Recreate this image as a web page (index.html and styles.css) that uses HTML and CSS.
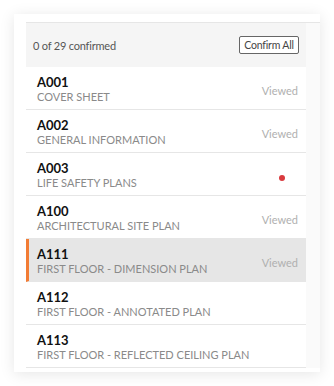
FILE: index.html
```html
<!DOCTYPE html>
<html lang="en">
  <head>
    <meta charset="UTF-8" />
    <meta name="viewport" content="width=device-width, initial-scale=1.0" />
    <title>Sheets</title>
    <link rel="stylesheet" href="styles.css">
  </head>
  <body>
    <div class="sheet-card">
      <div class="sheet-panel">
        <div class="sheet-list">
          <div class="sheet-header">
            <span class="confirm-count">0 of 29 confirmed</span>
            <button class="confirm-btn">Confirm All</button>
          </div>

          <div class="sheet-row">
            <div class="sheet-info">
              <div class="sheet-code">A001</div>
              <div class="sheet-title">COVER SHEET</div>
            </div>
            <div class="sheet-status">Viewed</div>
          </div>

          <div class="sheet-row">
            <div class="sheet-info">
              <div class="sheet-code">A002</div>
              <div class="sheet-title">GENERAL INFORMATION</div>
            </div>
            <div class="sheet-status">Viewed</div>
          </div>

          <div class="sheet-row">
            <div class="sheet-info">
              <div class="sheet-code">A003</div>
              <div class="sheet-title">LIFE SAFETY PLANS</div>
            </div>
            <div class="sheet-status"><span class="unread-dot"></span></div>
          </div>

          <div class="sheet-row">
            <div class="sheet-info">
              <div class="sheet-code">A100</div>
              <div class="sheet-title">ARCHITECTURAL SITE PLAN</div>
            </div>
            <div class="sheet-status">Viewed</div>
          </div>

          <div class="sheet-row active">
            <div class="sheet-info">
              <div class="sheet-code">A111</div>
              <div class="sheet-title">FIRST FLOOR - DIMENSION PLAN</div>
            </div>
            <div class="sheet-status">Viewed</div>
          </div>

          <div class="sheet-row">
            <div class="sheet-info">
              <div class="sheet-code">A112</div>
              <div class="sheet-title">FIRST FLOOR - ANNOTATED PLAN</div>
            </div>
            <div class="sheet-status"></div>
          </div>

          <div class="sheet-row">
            <div class="sheet-info">
              <div class="sheet-code">A113</div>
              <div class="sheet-title">FIRST FLOOR - REFLECTED CEILING PLAN</div>
            </div>
            <div class="sheet-status"></div>
          </div>
        </div>
      </div>
    </div>
  </body>
</html>
```

FILE: styles.css
```css
* {
  margin: 0;
  padding: 0;
  box-sizing: border-box;
}

body {
  font-family: Lato, "Liberation Sans", sans-serif;
  background: white;
  padding: 14px;
}

.sheet-card {
  width: 306px;
  height: 358px;
  background: white;
  box-shadow: 0 2px 14px rgba(0, 0, 0, 0.1);
  padding: 8px 0 0 12px;
}

.sheet-panel {
  border-top: 1px solid #e6e6e6;
  background: linear-gradient(to right, transparent 280px, #fafafa 280px);
}

.sheet-list {
  width: 280px;
  background: white;
}

.sheet-header {
  height: 44px;
  background: #f5f5f5;
  display: flex;
  align-items: center;
  justify-content: space-between;
  padding: 0 7px 0 7px;
}

.confirm-count {
  font-size: 11px;
  color: #555;
  letter-spacing: -0.2px;
}

.confirm-btn {
  width: 60px;
  height: 18px;
  font-family: inherit;
  font-size: 10.5px;
  letter-spacing: -0.2px;
  color: #444;
  background: white;
  border: 1px solid #666;
  border-radius: 2px;
  cursor: pointer;
}

.sheet-row {
  display: flex;
  align-items: center;
  justify-content: space-between;
  padding: 7px 8px 5px 11px;
  border-bottom: 1px solid #e6e6e6;
  height: 43px;
}

.sheet-row.active {
  background: #e6e6e6;
  border-left: 3px solid #f27c35;
  padding-left: 8px;
  border-bottom-color: #e6e6e6;
}

.sheet-code {
  font-size: 13px;
  line-height: 16px;
  font-weight: bold;
  color: #111;
}

.sheet-title {
  font-size: 11px;
  line-height: 14px;
  color: #8a8a8a;
}

.sheet-status {
  font-size: 11px;
  color: #b0b0b0;
  padding-top: 3px;
}

.unread-dot {
  display: inline-block;
  width: 6px;
  height: 6px;
  border-radius: 50%;
  background: #d93a3e;
  margin-right: 13px;
}
```
